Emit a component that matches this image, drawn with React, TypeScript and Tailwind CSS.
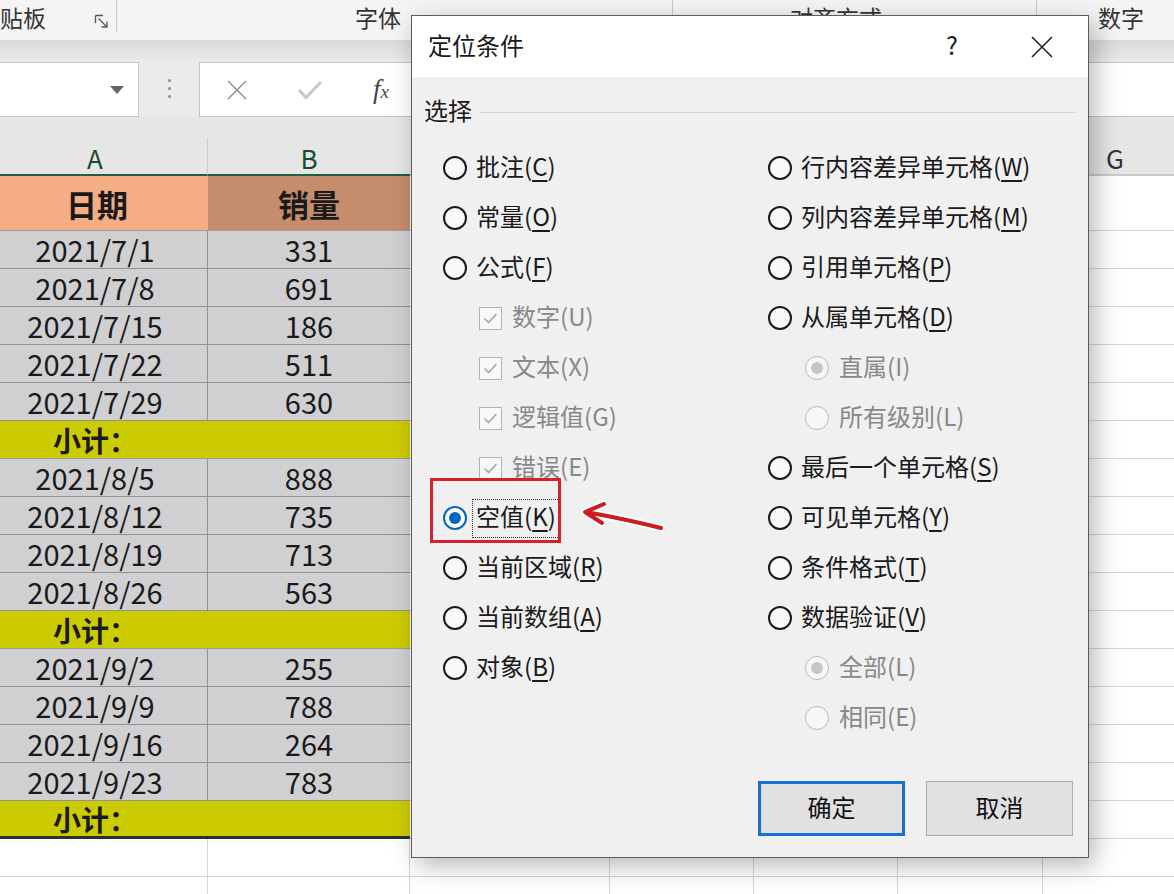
import React from 'react';

type Row = [string, string] | null;

const rows: Row[] = [
  ['2021/7/1', '331'],
  ['2021/7/8', '691'],
  ['2021/7/15', '186'],
  ['2021/7/22', '511'],
  ['2021/7/29', '630'],
  null,
  ['2021/8/5', '888'],
  ['2021/8/12', '735'],
  ['2021/8/19', '713'],
  ['2021/8/26', '563'],
  null,
  ['2021/9/2', '255'],
  ['2021/9/9', '788'],
  ['2021/9/16', '264'],
  ['2021/9/23', '783'],
  null,
];

function WhiteCells({ h }: { h: string }) {
  return (
    <>
      <div className={`w-[200px] ${h} shrink-0 border-r border-b border-[#d6d6d6] bg-white`} />
      <div className={`w-[144px] ${h} shrink-0 border-r border-b border-[#d6d6d6] bg-white`} />
      <div className={`w-[144px] ${h} shrink-0 border-r border-b border-[#d6d6d6] bg-white`} />
      <div className={`w-[145px] ${h} shrink-0 border-r border-b border-[#d6d6d6] bg-white`} />
      <div className={`flex-1 ${h} border-b border-[#d6d6d6] bg-white`} />
    </>
  );
}

function Mn({ t, k, u = true }: { t: string; k: string; u?: boolean }) {
  return (
    <span className="whitespace-nowrap">
      {t}(
      <span className={u ? 'underline decoration-[1.5px] underline-offset-[4px]' : ''}>{k}</span>)
    </span>
  );
}

function Radio({ state = 'off' }: { state?: 'off' | 'on' | 'dis' | 'dison' }) {
  if (state === 'on')
    return (
      <div className="w-[24px] h-[24px] rounded-full border-2 border-[#0067c0] bg-white flex items-center justify-center shrink-0">
        <div className="w-[12px] h-[12px] rounded-full bg-[#0067c0]" />
      </div>
    );
  if (state === 'dis' || state === 'dison')
    return (
      <div className="w-[24px] h-[24px] rounded-full border-[1.5px] border-[#b9b9b9] bg-[#f7f7f7] flex items-center justify-center shrink-0">
        {state === 'dison' && <div className="w-[12px] h-[12px] rounded-full bg-[#c6c6c6]" />}
      </div>
    );
  return <div className="w-[24px] h-[24px] rounded-full border-2 border-[#1a1a1a] bg-[#f9f9f9] shrink-0" />;
}

function Check() {
  return (
    <div className="w-[23px] h-[23px] border border-[#b3b3b3] bg-[#f8f8f8] flex items-center justify-center shrink-0">
      <svg width="17" height="17" viewBox="0 0 17 17">
        <path d="M2.5 8.5 L6.5 12.5 L14.5 4" fill="none" stroke="#9c9c9c" strokeWidth="1.3" />
      </svg>
    </div>
  );
}

function RItem({ t, k, state = 'off', sub = false }: { t: string; k: string; state?: 'off' | 'on' | 'dis' | 'dison'; sub?: boolean }) {
  const dis = state === 'dis' || state === 'dison';
  return (
    <div className={`h-[50px] flex items-center ${sub ? 'pl-[37px]' : ''}`}>
      <Radio state={state} />
      <span className={`relative top-[-2px] ${sub ? 'ml-[10px]' : 'ml-[9px]'} ${dis ? 'text-[#888888]' : 'text-[#1a1a1a]'}`}>
        <Mn t={t} k={k} u={!dis} />
      </span>
    </div>
  );
}

function CItem({ t, k }: { t: string; k: string }) {
  return (
    <div className="h-[50px] flex items-center pl-[36px]">
      <Check />
      <span className="relative top-[-2px] ml-[10px] text-[#888888]">
        <Mn t={t} k={k} u={false} />
      </span>
    </div>
  );
}

export default function App() {
  return (
    <div className="relative w-[1174px] h-[894px] overflow-hidden bg-white font-['Noto_Sans_CJK_SC',sans-serif] text-[#1a1a1a]">
      {/* Ribbon */}
      <div className="flex h-[40px] bg-[#f4f4f4] text-[23px] text-[#333] leading-none">
        <div className="flex w-[117px] h-[32px] pt-[3px] items-center justify-between border-r border-[#c9c9c9] pr-[6px]">
          <span>贴板</span>
          <svg width="16" height="16" viewBox="0 0 16 16" className="mt-[8px]">
            <path d="M1.5 1.5 H9 M1.5 1.5 V9" stroke="#555" strokeWidth="1.3" fill="none" />
            <path d="M4.5 4.5 L13 13 M13 7.5 V13 H7.5" stroke="#555" strokeWidth="1.3" fill="none" />
          </svg>
        </div>
        <div className="w-[556px] h-[32px] pt-[3px] flex items-center border-r border-[#c9c9c9] pl-[238px]">字体</div>
        <div className="w-[364px] h-[32px] pt-[3px] flex items-center border-r border-[#c9c9c9] pl-[117px]">对齐方式</div>
        <div className="flex-1 h-[32px] pt-[3px] flex items-center pl-[61px]">数字</div>
      </div>
      <div className="h-[22px] bg-gradient-to-b from-[#d9d9d9] to-[#ebebeb]" />

      {/* Formula bar */}
      <div className="flex h-[55px] bg-[#ebebeb]">
        <div className="w-[140px] -ml-px shrink-0 h-full bg-white border border-[#c4c4c4] flex items-center justify-end pr-[14px]">
          <svg width="14" height="8" viewBox="0 0 14 8">
            <path d="M0 0 H14 L7 8 Z" fill="#666" />
          </svg>
        </div>
        <div className="w-[60px] shrink-0 flex flex-col items-center justify-center gap-[5px] pb-[2px]">
          <div className="w-[3px] h-[3px] rounded-full bg-[#8a8a8a]" />
          <div className="w-[3px] h-[3px] rounded-full bg-[#8a8a8a]" />
          <div className="w-[3px] h-[3px] rounded-full bg-[#8a8a8a]" />
        </div>
        <div className="flex-1 h-full bg-white border border-r-0 border-[#c4c4c4] flex items-center">
          <div className="w-[73px] flex justify-center">
            <svg width="22" height="20" viewBox="0 0 22 20">
              <path d="M2 1 L20 19 M20 1 L2 19" stroke="#8c8c8c" strokeWidth="1.4" fill="none" />
            </svg>
          </div>
          <div className="w-[73px] flex justify-center">
            <svg width="26" height="20" viewBox="0 0 26 20">
              <path d="M2 10 L9 17.5 L24 2" stroke="#c8c8c8" strokeWidth="3" fill="none" />
            </svg>
          </div>
          <div className="w-[70px] flex justify-center">
            <span className="italic font-['Liberation_Serif',serif] text-[27px] leading-none text-[#444]">
              f<span className="text-[19px]">x</span>
            </span>
          </div>
        </div>
      </div>
      <div className="h-[21px] bg-[#e6e6e6]" />

      {/* Column headers */}
      <div className="flex h-[38px] bg-[#e6e6e6] text-[26px] leading-none">
        <div className="w-[208px] shrink-0 border-r border-[#c9c9c9] border-b-2 border-b-[#21603c] flex items-center justify-center pr-[17px] pt-[4px] text-[#1d4a2f]">A</div>
        <div className="w-[202px] shrink-0 border-b-2 border-b-[#21603c] flex items-center justify-center pt-[4px] text-[#1d4a2f]">B</div>
        <div className="w-[200px] shrink-0 border-r border-[#c9c9c9] border-b-2 border-b-[#c9c9c9]" />
        <div className="w-[144px] shrink-0 border-r border-[#c9c9c9] border-b-2 border-b-[#c9c9c9]" />
        <div className="w-[144px] shrink-0 border-r border-[#c9c9c9] border-b-2 border-b-[#c9c9c9]" />
        <div className="w-[145px] shrink-0 border-r border-[#c9c9c9] border-b-2 border-b-[#c9c9c9]" />
        <div className="flex-1 border-b-2 border-b-[#c9c9c9] flex items-center pl-[63px] pt-[4px] text-[#333]">G</div>
      </div>

      {/* Header row */}
      <div className="flex h-[55px]">
        <div className="w-[208px] shrink-0 bg-[#f5ad83] border-b border-[#9c9c9c] flex items-center justify-center pr-[14px] text-[31px] font-bold leading-none">日期</div>
        <div className="w-[202px] shrink-0 bg-[#c58d6b] border-b border-[#9c9c9c] flex items-center justify-center text-[31px] font-bold leading-none">销量</div>
        <WhiteCells h="h-[55px]" />
      </div>

      {/* Data rows */}
      {rows.map((r, i) => {
        const last = i === rows.length - 1;
        if (r === null)
          return (
            <div key={i} className="flex h-[38px]">
              <div
                className={`w-[410px] shrink-0 bg-[#cccb00] flex items-center pl-[53px] text-[28px] font-bold leading-none ${
                  last ? 'border-b-[3px] border-[#24332d]' : 'border-b border-[#9c9c9c]'
                }`}
              >
                小计：
              </div>
              <WhiteCells h="h-[38px]" />
            </div>
          );
        return (
          <div key={i} className="flex h-[38px]">
            <div className="w-[208px] shrink-0 bg-[#d0d0d2] border-r border-b border-[#939393] flex items-center justify-center pr-[17px] text-[29px] leading-none">
              {r[0]}
            </div>
            <div className="w-[202px] shrink-0 bg-[#d0d0d2] border-b border-[#939393] flex items-center justify-center text-[29px] leading-none">
              {r[1]}
            </div>
            <WhiteCells h="h-[38px]" />
          </div>
        );
      })}

      <div className="flex h-[38px]">
        <div className="w-[208px] shrink-0 border-r border-b border-[#d6d6d6] bg-white" />
        <div className="w-[202px] shrink-0 border-r border-b border-[#d6d6d6] bg-white" />
        <WhiteCells h="h-[38px]" />
      </div>
      <div className="flex h-[38px]">
        <div className="w-[208px] shrink-0 border-r border-[#d6d6d6] bg-white" />
        <div className="w-[202px] shrink-0 border-r border-[#d6d6d6] bg-white" />
        <div className="w-[200px] shrink-0 border-r border-[#d6d6d6] bg-white" />
        <div className="w-[144px] shrink-0 border-r border-[#d6d6d6] bg-white" />
        <div className="w-[144px] shrink-0 border-r border-[#d6d6d6] bg-white" />
        <div className="w-[145px] shrink-0 border-r border-[#d6d6d6] bg-white" />
        <div className="flex-1 bg-white" />
      </div>

      {/* Dialog */}
      <div className="absolute left-[411px] top-[15px] w-[678px] h-[843px] border border-[#5c5c5c] bg-[#f0f0f0] shadow-[6px_8px_24px_rgba(0,0,0,0.28)] flex flex-col text-[24px] leading-none">
        <div className="h-[61px] bg-white flex items-center pl-[16px] shrink-0">
          <span className="relative top-[-2px]">定位条件</span>
          <div className="ml-auto flex items-center">
            <div className="w-[40px] flex justify-center text-[25px] text-[#222] relative top-[-2px]">?</div>
            <div className="w-[40px] ml-[50px] flex justify-center">
              <svg width="22" height="22" viewBox="0 0 22 22">
                <path d="M1 1 L21 21 M21 1 L1 21" stroke="#222" strokeWidth="1.6" fill="none" />
              </svg>
            </div>
            <div className="w-[26px]" />
          </div>
        </div>

        <div className="mt-[20px] h-[30px] flex items-center pl-[12px] pr-[13px]">
          <span className="relative top-[-2px]">选择</span>
          <div className="flex-1 h-px bg-[#d3d3d3] ml-[8px]" />
        </div>

        <div className="mt-[16px] pl-[31px] grid grid-cols-[325px_1fr]">
          <div className="flex flex-col">
            <RItem t="批注" k="C" />
            <RItem t="常量" k="O" />
            <RItem t="公式" k="F" />
            <CItem t="数字" k="U" />
            <CItem t="文本" k="X" />
            <CItem t="逻辑值" k="G" />
            <CItem t="错误" k="E" />
            <div className="relative h-[50px] flex items-center">
              <Radio state="on" />
              <span className="ml-[5px] h-[39px] px-[3px] border border-dotted border-[#333] flex items-center">
                <span className="relative top-[-2px]">
                  <Mn t="空值" k="K" />
                </span>
              </span>
              <div className="absolute left-[-13px] top-[-15px] w-[131px] h-[65px] border-[3px] border-[#d3212d]" />
            </div>
            <RItem t="当前区域" k="R" />
            <RItem t="当前数组" k="A" />
            <RItem t="对象" k="B" />
          </div>
          <div className="flex flex-col">
            <RItem t="行内容差异单元格" k="W" />
            <RItem t="列内容差异单元格" k="M" />
            <RItem t="引用单元格" k="P" />
            <RItem t="从属单元格" k="D" />
            <RItem t="直属" k="I" state="dison" sub />
            <RItem t="所有级别" k="L" state="dis" sub />
            <RItem t="最后一个单元格" k="S" />
            <RItem t="可见单元格" k="Y" />
            <RItem t="条件格式" k="T" />
            <RItem t="数据验证" k="V" />
            <RItem t="全部" k="L" state="dison" sub />
            <RItem t="相同" k="E" state="dis" sub />
          </div>
        </div>

        <div className="mt-[38px] flex justify-end gap-[21px] pr-[15px]">
          <button className="w-[147px] h-[55px] bg-[#e1e1e1] border-[3px] border-[#1a6fd6] flex items-center justify-center text-[24px] text-[#111]">
            <span className="relative top-[-2px]">确定</span>
          </button>
          <button className="w-[147px] h-[55px] bg-[#e1e1e1] border border-[#adadad] flex items-center justify-center text-[24px] text-[#111]">
            <span className="relative top-[-2px]">取消</span>
          </button>
        </div>
      </div>

      {/* Red arrow annotation */}
      <svg className="absolute left-[578px] top-[496px]" width="92" height="40" viewBox="0 0 92 40">
        <g fill="none" strokeLinecap="round" strokeLinejoin="round">
          <path d="M26 8 L7 16 L24 27 M8 16 C 30 20, 55 25, 83 32" stroke="#ffffff" strokeWidth="8" />
          <path d="M26 8 L7 16 L24 27 M8 16 C 30 20, 55 25, 83 32" stroke="#cf1b22" strokeWidth="4" />
        </g>
      </svg>
    </div>
  );
}
